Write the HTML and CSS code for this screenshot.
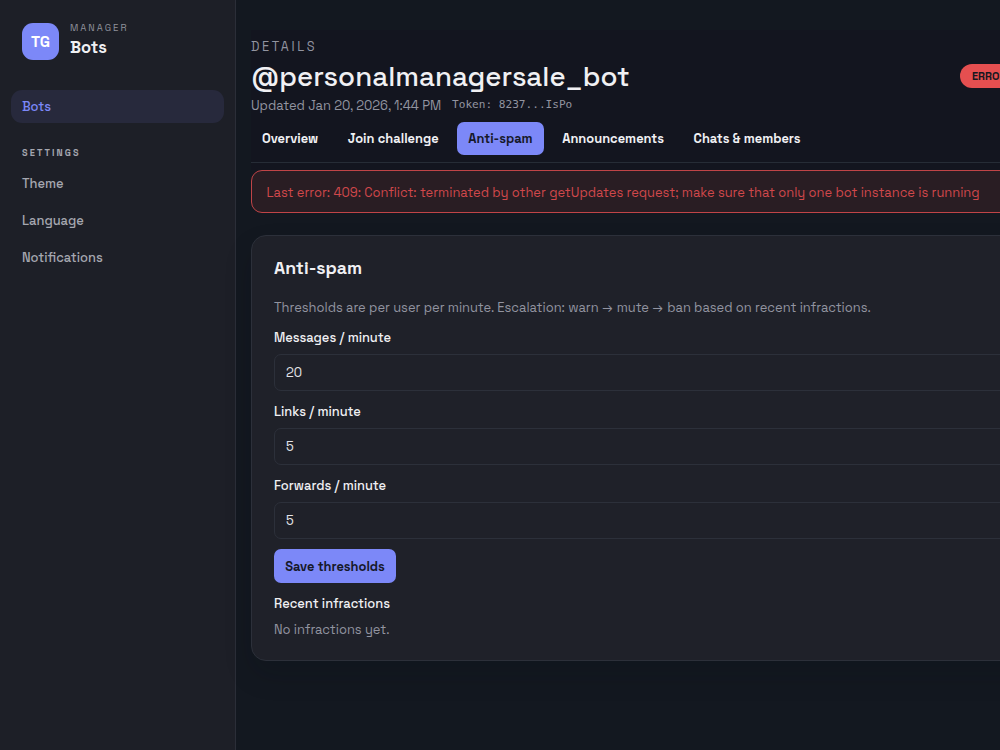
FILE: index.html
```html
<!DOCTYPE html>
<html lang="en">
<head>
    <meta charset="UTF-8">
    <meta name="viewport" content="width=device-width, initial-scale=1.0">
    <title>Bots Manager</title>
    <link rel="stylesheet" href="styles.css">
</head>
<body>
    <div class="layout">
        <aside class="sidebar">
            <div class="brand">
                <div class="logo">TG</div>
                <div>
                    <div class="brand-label">MANAGER</div>
                    <div class="brand-title">Bots</div>
                </div>
            </div>
            <nav class="nav">
                <a class="nav-link active">Bots</a>
                <div class="nav-heading">SETTINGS</div>
                <a class="nav-link">Theme</a>
                <a class="nav-link">Language</a>
                <a class="nav-link">Notifications</a>
            </nav>
        </aside>

        <main class="main">
            <div class="topbar">
                <header class="header">
                    <div>
                        <div class="eyebrow">DETAILS</div>
                        <h1>@personalmanagersale_bot</h1>
                        <div class="meta">
                            <span class="updated">Updated Jan 20, 2026, 1:44 PM</span>
                            <span class="token">Token: 8237...IsPo</span>
                        </div>
                    </div>
                    <span class="status">ERROR</span>
                </header>

                <div class="tabs">
                    <a class="tab">Overview</a>
                    <a class="tab">Join challenge</a>
                    <a class="tab active">Anti-spam</a>
                    <a class="tab">Announcements</a>
                    <a class="tab">Chats &amp; members</a>
                </div>
            </div>

            <div class="alert">Last error: 409: Conflict: terminated by other getUpdates request; make sure that only one bot instance is running</div>

            <section class="card">
                <h2>Anti-spam</h2>
                <p class="hint">Thresholds are per user per minute. Escalation: warn <span class="arrow">→</span> mute <span class="arrow">→</span> ban based on recent infractions.</p>
                <form>
                    <label for="messages">Messages / minute</label>
                    <input type="text" id="messages" value="20">
                    <label for="links">Links / minute</label>
                    <input type="text" id="links" value="5">
                    <label for="forwards">Forwards / minute</label>
                    <input type="text" id="forwards" value="5">
                    <button type="button">Save thresholds</button>
                </form>
                <h3>Recent infractions</h3>
                <p class="empty">No infractions yet.</p>
            </section>
        </main>
    </div>
</body>
</html>
```
FILE: styles.css
```css
* {
    box-sizing: border-box;
}
body {
    margin: 0;
    height: 750px;
    overflow: hidden;
    background-color: #131820;
    color: #f0f0f3;
    font-family: "Space Grotesk", Inter, sans-serif;
    font-size: 12.92px;
}
h1, h2, h3, p {
    margin: 0;
}
.layout {
    display: flex;
    height: 750px;
}
.sidebar {
    flex: 0 0 236px;
    padding: 22px 11px;
    background-color: #1d1f27;
    border-right: 1px solid #2b2e38;
}
.brand {
    display: flex;
    align-items: center;
    gap: 11px;
    height: 38px;
    padding-left: 11px;
}
.logo {
    width: 37px;
    height: 37px;
    border-radius: 11px;
    background-color: #7c88f8;
    color: #fff;
    font-size: 15.5px;
    font-weight: 700;
    line-height: 38px;
    text-align: center;
}
.brand-label {
    color: #8f919b;
    font-size: 9.6px;
    line-height: 12px;
    letter-spacing: 2px;
}
.brand-title {
    font-size: 16.5px;
    font-weight: 600;
    line-height: 27px;
}
.nav {
    margin-top: 29.5px;
}
.nav-link {
    display: block;
    height: 34px;
    margin-bottom: 3px;
    padding-left: 11px;
    border-radius: 11px;
    color: #a5a7b0;
    font-weight: 500;
    line-height: 34px;
}
.nav-link.active {
    height: 33.5px;
    margin-bottom: 0;
    background-color: #27293c;
    color: #7c88f8;
    line-height: 33px;
}
.nav-heading {
    padding: 24px 11px 8px;
    color: #a5a7b0;
    font-size: 9.23px;
    font-weight: 600;
    line-height: 12px;
    letter-spacing: 2.1px;
}
.main {
    flex: 0 0 820px;
    padding: 30px 0 0 15px;
}
.topbar {
    padding: 8px 0 7px;
    background-color: #13151f;
}
.header {
    display: flex;
    align-items: center;
    justify-content: space-between;
    height: 76px;
}
.eyebrow {
    color: #9294a0;
    font-size: 12.7px;
    line-height: 18px;
    letter-spacing: 2.6px;
}
h1 {
    font-size: 27.7px;
    font-weight: 500;
    line-height: 41px;
}
.meta {
    display: flex;
    gap: 11px;
    color: #9294a0;
    line-height: 18px;
}
.token {
    font-family: "DejaVu Sans Mono", monospace;
    font-size: 11.1px;
    line-height: 15px;
}
.status {
    width: 96px;
    height: 24px;
    padding-left: 12px;
    border-radius: 12px;
    background-color: #e54f50;
    color: #16171f;
    font-size: 11px;
    font-weight: 600;
    line-height: 24px;
}
.tabs {
    display: flex;
    gap: 7.6px;
    height: 49px;
    padding-top: 8px;
    border-bottom: 1px solid #262c36;
}
.tab {
    height: 33px;
    padding: 0 11px;
    border-radius: 7px;
    font-weight: 600;
    line-height: 33px;
    white-space: nowrap;
}
.tab.active {
    background-color: #7c88f8;
    color: #16192a;
}
.alert {
    height: 43px;
    padding-left: 14.5px;
    border: 1px solid #c04447;
    border-radius: 11px;
    background-color: #291d23;
    color: #d0484b;
    line-height: 43px;
    white-space: nowrap;
}
.card {
    height: 426px;
    margin-top: 22px;
    padding: 20px 22px;
    border: 1px solid #2c303a;
    border-radius: 15px;
    background-color: #1f2129;
    box-shadow: 0 14px 28px rgba(10, 11, 20, 0.15);
}
h2 {
    font-size: 17.7px;
    font-weight: 600;
    line-height: 24px;
}
.hint {
    margin-top: 19px;
    color: #9294a0;
    line-height: 18px;
}
.arrow {
    margin-right: 1.2px;
}
label {
    display: block;
    margin: 12px 0 7px;
    font-weight: 500;
    line-height: 18px;
}
input {
    display: block;
    width: 100%;
    height: 37px;
    padding: 0 11px;
    border: 1px solid #2c303a;
    border-radius: 7px;
    background-color: transparent;
    color: #e4e4e8;
    font: inherit;
}
button {
    display: block;
    width: 122px;
    height: 34px;
    margin-top: 10px;
    padding: 0;
    border: none;
    border-radius: 7px;
    background-color: #7c88f8;
    color: #16192a;
    font: inherit;
    font-weight: 600;
}
h3 {
    margin-top: 12px;
    font-size: 12.92px;
    font-weight: 500;
    line-height: 18px;
}
.empty {
    margin-top: 8px;
    color: #9294a0;
    line-height: 18px;
}
```
